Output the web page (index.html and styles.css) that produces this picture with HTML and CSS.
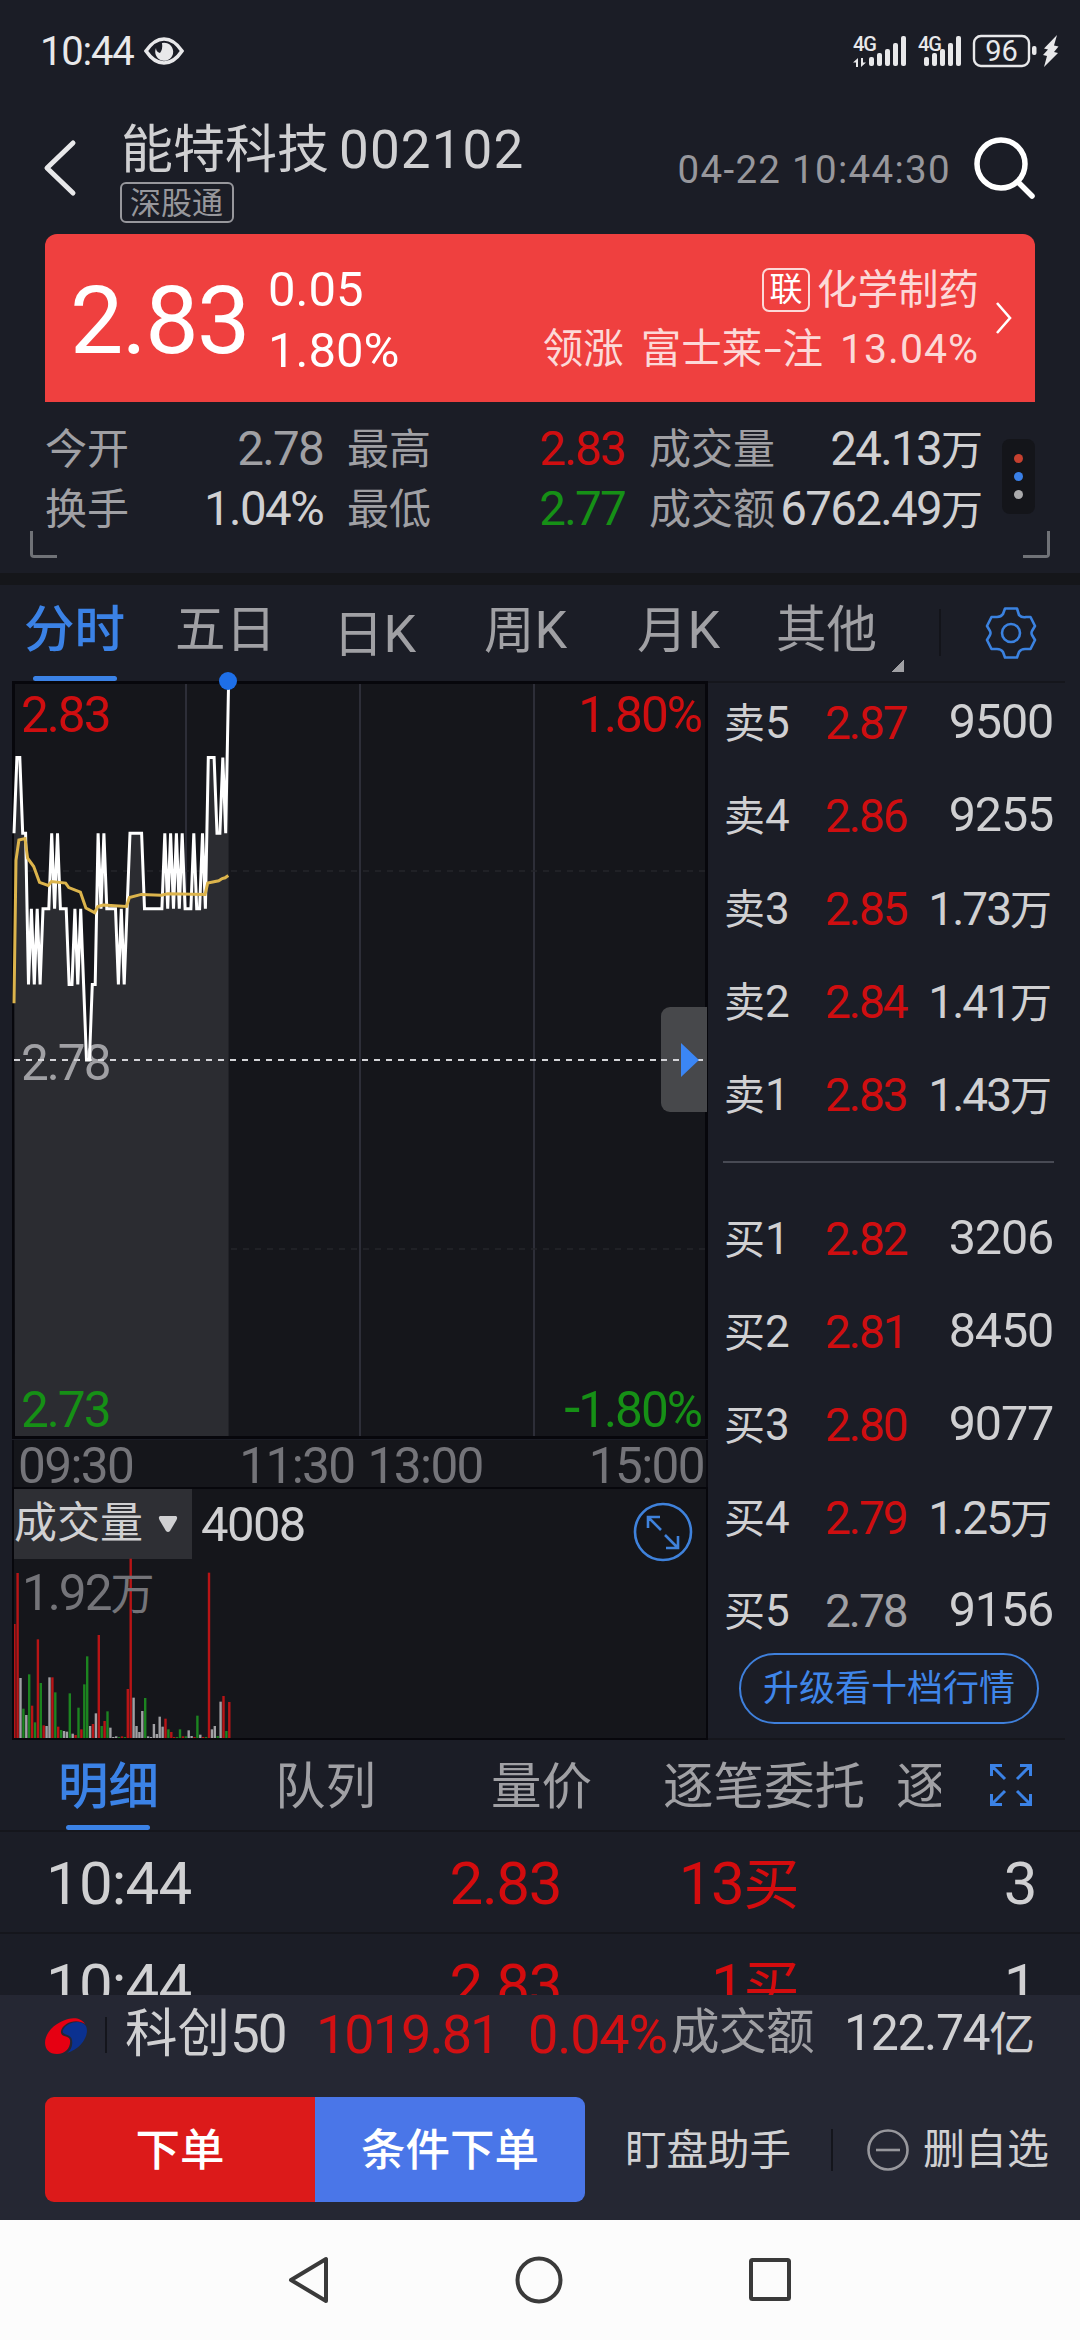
FILE: index.html
```html
<!DOCTYPE html>
<html lang="zh-CN">
<head>
  <meta charset="UTF-8">
  <title>能特科技 002102</title>
  <link rel="stylesheet" href="styles.css">
</head>
<body>
  <div class="status">
    <span class="clock">10:44</span>
    <svg class="eye" width="40" height="28" viewBox="0 0 40 28">
      <path d="M2 14Q10 2 20 2T38 14Q30 26 20 26T2 14Z" fill="none" stroke="#e8e8ea" stroke-width="3.6"/>
      <path d="M18 6A9 9 0 1 1 12 11Q12 15 16 16Q19 12 18 6Z" fill="#e8e8ea"/>
    </svg>
    <svg class="signals" width="206" height="34" viewBox="0 0 206 34" fill="#e8e8ea">
      <text class="net" x="0" y="17">4G</text>
      <path d="M5 33V24L0 28.500H3V33ZM8 24V33L13 28.500H10V24Z"/>
      <rect x="16" y="23" width="5" height="9" rx="2"/><rect x="24" y="19" width="5" height="13" rx="2"/><rect x="32" y="15" width="5" height="17" rx="2"/><rect x="40" y="9" width="5" height="23" rx="2"/><rect x="48" y="2" width="5" height="30" rx="2"/>
      <text class="net" x="65" y="17">4G</text>
      <rect x="71" y="23" width="5" height="9" rx="2"/><rect x="79" y="19" width="5" height="13" rx="2"/><rect x="87" y="15" width="5" height="17" rx="2"/><rect x="95" y="9" width="5" height="23" rx="2"/><rect x="103" y="2" width="5" height="30" rx="2"/>
      <rect x="121" y="2" width="55" height="30" rx="7" fill="none" stroke="#e8e8ea" stroke-width="2.400"/>
      <text class="battery" x="148.500" y="27" text-anchor="middle">96</text>
      <rect x="179" y="12" width="4.500" height="9" rx="2"/>
      <path d="M204 1L191 14.500L195 15.500L190 21L194 22L191 33L205 19L201 18L205.500 12.500L201 11.500Z"/>
    </svg>
  </div>

  <div class="header">
    <svg class="back" width="34" height="56" viewBox="0 0 34 56"><path d="M30 3L4 28L30 53" fill="none" stroke="#e8e8ea" stroke-width="5" stroke-linecap="round" stroke-linejoin="round"/></svg>
    <div class="stock">
      <div class="stock-name"><span>能特科技</span><b>002102</b></div>
      <span class="tag">深股通</span>
    </div>
    <span class="date">04-22 10:44:30</span>
    <svg class="search" width="62" height="62" viewBox="0 0 62 62" fill="none" stroke="#fff" stroke-width="5.500" stroke-linecap="round"><circle cx="27" cy="27" r="24"/><path d="M45 46L58 59"/></svg>
  </div>

  <div class="price-card">
    <span class="price">2.83</span>
    <div class="change"><span>0.05</span><span>1.80%</span></div>
    <div class="sector">
      <div class="sector-name"><i>联</i>化学制药</div>
      <div class="sector-lead"><span>领涨</span><span>富士莱<i class="dash">-</i>注</span><span class="lead-pct">13.04%</span></div>
    </div>
    <svg width="18" height="34" viewBox="0 0 18 34"><path d="M2 2L15 17L2 32" fill="none" stroke="#fff" stroke-width="2.600"/></svg>
  </div>

  <div class="quote">
    <div class="stats">
      <span>今开</span><b class="flat">2.78</b><span>最高</span><b class="up">2.83</b><span>成交量</span><b>24.13<i>万</i></b>
      <span>换手</span><b>1.04%</b><span>最低</span><b class="down">2.77</b><span>成交额</span><b>6762.49<i>万</i></b>
    </div>
    <div class="dots"><i></i><i></i><i></i></div>
    <span class="corner corner-left"></span>
    <span class="corner corner-right"></span>
  </div>

  <div class="tabs">
    <span class="tab active">分时</span>
    <span class="tab">五日</span>
    <span class="tab tab-low">日<b>K</b></span>
    <span class="tab">周<b>K</b></span>
    <span class="tab">月<b>K</b></span>
    <span class="tab more">其他</span>
    <svg class="gear" width="52" height="54" viewBox="0 0 52 54" fill="none" stroke="#3b82e0" stroke-width="2.600" stroke-linejoin="round">
      <path d="M20 2.500H32L34 9Q37 12 41 11L45.500 11L50 20L47 25Q46 27 47 29L50 34L45.500 43L40 43Q36 43 34 46L32 51.500H20L18 46Q16 43 12 43L6.500 43L2 34L5 29Q6 27 5 25L2 20L6.500 11L12 11Q16 11 18 8Z"/>
      <circle cx="26" cy="27" r="9"/>
    </svg>
  </div>

  <div class="main">
    <div class="charts">
      <svg id="priceChart" class="price-chart" width="696" height="758" viewBox="0 0 696 758">
        <rect x="1.500" y="1.500" width="693" height="755" fill="#15161b" stroke="#07070c" stroke-width="3"/>
        <path d="M174 3V755M348 3V755M522 3V755" stroke="#2d2e38" stroke-width="2"/>
        <path d="M3 190H694M3 568H694" stroke="#25262b" stroke-width="1.500" stroke-dasharray="6 6"/>
        <path id="priceArea" fill="#2b2c31"/>
        <text class="up" x="9" y="51">2.83</text>
        <text class="up" x="689" y="51" text-anchor="end">1.80%</text>
        <text class="flat" x="9" y="399">2.78</text>
        <text class="down" x="9" y="746">2.73</text>
        <text class="down" x="689" y="746" text-anchor="end"><tspan class="minus">-</tspan>1.80%</text>
        <path d="M2 379H649" stroke="#d4d4d8" stroke-width="2" stroke-dasharray="6 6"/>
        <path id="priceLine" fill="none" stroke="#fff" stroke-width="3"/>
        <path id="avgLine" fill="none" stroke="#dcb44c" stroke-width="3"/>
      </svg>
      <svg class="now-dot" width="18" height="18" viewBox="0 0 18 18"><circle cx="9" cy="9" r="9" fill="#1e6fe8"/></svg>
      <div class="fold">
        <svg width="46" height="105" viewBox="0 0 46 105"><path d="M0 53H46" stroke="#d4d4d8" stroke-width="2" stroke-dasharray="6 6"/><path d="M20 36L38 53L20 70Z" fill="#3b86f5"/></svg>
      </div>
      <div class="axis"><span>09:30</span><span>11:30</span><span>13:00</span><span>15:00</span></div>
      <div class="volume">
        <div class="volume-head">
          <span class="picker">成交量<svg width="20" height="18" viewBox="0 0 20 18"><path d="M2 1H18Q20 2 18.500 5L12 16Q10 18 8 16L1.500 5Q0 2 2 1Z" fill="#d0d0d2"/></svg></span>
          <b>4008</b>
          <svg class="zoom" width="60" height="60" viewBox="0 0 60 60" fill="none" stroke="#3f82dc" stroke-width="2.600"><circle cx="30" cy="30" r="28"/><path d="M15 26V15H27M15 15L28 28M45 34V46H33M45 46L32 33"/></svg>
        </div>
        <svg id="volumeBars" width="692" height="179" viewBox="0 0 692 179"><text class="axis-max" x="8" y="51">1.92<tspan>万</tspan></text></svg>
      </div>
    </div>

    <div class="book">
      <div class="row"><span>卖<b>5</b></span><b class="up">2.87</b><em>9500</em></div>
      <div class="row"><span>卖<b>4</b></span><b class="up">2.86</b><em>9255</em></div>
      <div class="row"><span>卖<b>3</b></span><b class="up">2.85</b><em class="wan">1.73<i>万</i></em></div>
      <div class="row"><span>卖<b>2</b></span><b class="up">2.84</b><em class="wan">1.41<i>万</i></em></div>
      <div class="row"><span>卖<b>1</b></span><b class="up">2.83</b><em class="wan">1.43<i>万</i></em></div>
      <hr>
      <div class="row"><span>买<b>1</b></span><b class="up">2.82</b><em>3206</em></div>
      <div class="row"><span>买<b>2</b></span><b class="up">2.81</b><em>8450</em></div>
      <div class="row"><span>买<b>3</b></span><b class="up">2.80</b><em>9077</em></div>
      <div class="row"><span>买<b>4</b></span><b class="up">2.79</b><em class="wan">1.25<i>万</i></em></div>
      <div class="row"><span>买<b>5</b></span><b class="flat">2.78</b><em>9156</em></div>
      <div class="upgrade">升级看十档行情</div>
    </div>
  </div>

  <div class="detail-tabs">
    <div class="detail-list">
      <span class="active">明细</span><span>队列</span><span>量价</span><span>逐笔委托</span><span>逐</span>
    </div>
    <svg width="44" height="44" viewBox="0 0 44 44" fill="none" stroke="#3b82e6" stroke-width="3"><path d="M2.500 13V2.500H13M2.500 2.500L16 16M31 2.500H41.500V13M41.500 2.500L28 16M2.500 31V41.500H13M2.500 41.500L16 28M31 41.500H41.500V31M41.500 41.500L28 28"/></svg>
  </div>
  <div class="ticks">
    <div class="tick"><span>10:44</span><b>2.83</b><b>13<i>买</i></b><span>3</span></div>
    <div class="tick"><span>10:44</span><b>2.83</b><b>1<i>买</i></b><span>1</span></div>
  </div>

  <div class="footer">
    <div class="index">
      <svg class="logo" width="42" height="40" viewBox="0 0 42 40">
        <path d="M40 9C34 -1 17 3 6 14C-4 25 -1 39 12 39C21 39 26 32 25 25C24 20 15 23 16 16C18 8 31 3 40 9Z" fill="#e60012"/>
        <path d="M41 11C36 4 22 7 18 15C16 21 26 18 27 25C28 31 26 35 22 38C36 34 45 20 41 11Z" fill="#0b3190"/>
      </svg>
      <span class="index-name">科创<b>50</b></span>
      <b class="index-value">1019.81</b>
      <b class="index-pct">0.04%</b>
      <span class="index-label">成交额</span>
      <b class="index-amount">122.74<i>亿</i></b>
    </div>
    <div class="actions">
      <span class="btn buy">下单</span><span class="btn cond">条件下单</span>
      <span class="watch">盯盘助手</span>
      <span class="remove"><svg width="42" height="42" viewBox="0 0 42 42" fill="none" stroke="#97979c" stroke-width="2.600"><circle cx="21" cy="21" r="19.500"/><path d="M9 21H33"/></svg>删自选</span>
    </div>
  </div>

  <div class="nav">
    <svg width="44" height="50" viewBox="0 0 44 50"><path d="M39 4V46L4 25Z"/></svg>
    <svg width="50" height="50" viewBox="0 0 50 50"><circle cx="25" cy="25" r="21.500"/></svg>
    <svg width="46" height="50" viewBox="0 0 46 50"><rect x="4" y="5" width="38" height="39" rx="1.500"/></svg>
  </div>
  <script src="chart.js"></script>
</body>
</html>
```
FILE: styles.css
```css
* { box-sizing: border-box; }
body { margin: 0; width: 1080px; height: 2340px; overflow: hidden; background: #1b1d26; color: #d0d0d2; font-family: Roboto, "Noto Sans CJK SC", sans-serif; line-height: 1; white-space: nowrap; }
b, i, em { font-weight: normal; font-style: normal; }
svg { display: block; flex: none; overflow: visible; }
.up { color: #cf0e10; fill: #cf0e10; }
.down { color: #169016; fill: #169016; }
.flat { color: #a0a0a4; fill: #a0a0a4; }

.status { display: flex; align-items: center; height: 102px; padding: 0 21px 0 39px; color: #e8e8ea; }
.clock { font-size: 40px; letter-spacing: -1.2px; width: 105px; padding: 2px 0 0 1px; }
.signals { margin-left: auto; }
.net { font-size: 20px; font-weight: 500; letter-spacing: -1px; }
.battery { font-size: 29px; }

.header { display: flex; align-items: center; height: 132px; padding: 0 46px 0 43px; }
.stock { margin: 9px 0 0 43px; display: flex; flex-direction: column; align-items: flex-start; gap: 6px; }
.stock-name { display: flex; align-items: center; height: 54px; margin-left: 1px; padding-top: 4px; font-size: 52px; }
.stock-name b { font-size: 53px; letter-spacing: 1.1px; margin-left: 10px; margin-top: -2px; }
.tag { height: 41px; padding: 3px 9px 0 8px; border: 2px solid #97979c; border-radius: 6px; color: #97979c; font-size: 31px; line-height: 33px; }
.date { margin-left: auto; font-size: 38.5px; letter-spacing: 1.3px; color: #97979c; padding-top: 5px; }
.search { margin: 0 -2px 0 23px; }

.price-card { display: flex; align-items: center; height: 168px; margin: 0 45px; padding: 0 22px 0 25px; border-radius: 12px 12px 0 0; background: #ef403f; color: #fff; }
.price { width: 198px; font-size: 95px; letter-spacing: -1.6px; padding-top: 4px; }
.change { display: flex; flex-direction: column; gap: 12px; font-size: 49px; padding-top: 3px; }
.sector { display: flex; flex-direction: column; align-items: flex-end; gap: 13px; margin: 0 16px 0 auto; font-size: 40.5px; color: #fcd9d8; padding-top: 3px; }
.sector-name { display: flex; align-items: center; height: 46px; }
.sector-name i { display: block; width: 48px; height: 44px; margin-right: 7px; border: 2px solid #fcd9d8; border-radius: 7px; color: #fff; font-size: 33px; line-height: 39px; text-align: center; }
.sector-lead { display: flex; gap: 17px; height: 46px; align-items: center; }
.dash { display: inline-block; margin: 0 4px 0 5px; transform: scaleX(1.6); }
.lead-pct { font-size: 41px; letter-spacing: 1px; }

.quote { position: relative; display: flex; height: 183px; padding: 18px 45px 0; border-bottom: 12px solid #15161a; }
.stats { display: grid; grid-template-columns: 100px 178px 150px 152px 150px 208px; grid-template-rows: 60px 60px; align-items: center; font-size: 42px; }
.stats span { color: #a0a0a4; }
.stats span:nth-child(6n+3), .stats span:nth-child(6n+5) { padding-left: 24px; }
.stats b { font-size: 47.5px; letter-spacing: -1.7px; text-align: right; }
.stats i { font-size: 42px; letter-spacing: 0; }
.dots { display: flex; flex-direction: column; align-items: center; justify-content: center; gap: 9px; width: 33px; height: 75px; margin: 19px 0 0 19px; border-radius: 8px; background: #14151a; }
.dots i { width: 9px; height: 9px; border-radius: 50%; background: #c5402f; }
.dots i:nth-child(2) { background: #3a80e8; }
.dots i:nth-child(3) { background: #aaaaac; }
.corner { position: absolute; top: 129px; width: 27px; height: 27px; border: solid #707277; }
.corner-left { left: 30px; border-width: 0 0 3px 3px; border-bottom-left-radius: 4px; }
.corner-right { right: 30px; border-width: 0 3px 3px 0; border-bottom-right-radius: 4px; }

.tabs { display: grid; grid-template-columns: 151px 158px 151px 153px 139px 165px 1fr; height: 96px; padding-left: 24px; font-size: 50.5px; color: #a0a0a4; }
.tab { position: relative; height: 96px; padding-top: 20px; }
.tab b { font-size: 52px; }
.tab-low { padding-top: 24px; }
.tab.active { color: #3b82e6; font-weight: 500; }
.tab.active::after { content: ""; position: absolute; left: 9px; bottom: 0; width: 84px; height: 5px; border-radius: 3px; background: #3b82e6; }
.more { border-right: 2px solid #15161c; border-image: linear-gradient(transparent 26%, #13141a 26% 73%, transparent 73%) 1; }
.more::after { content: ""; position: absolute; left: 116px; top: 75px; width: 12px; height: 12px; background: linear-gradient(135deg, transparent 50%, #a0a0a4 50%); }
.gear { margin: 21px 0 0 44px; }

.main { display: flex; height: 1059px; padding-left: 12px; }
.charts { position: relative; width: 696px; }
.price-chart text, .axis-max { font-size: 49.5px; letter-spacing: -2px; }
.price-chart .minus { font-size: 58px; }
.now-dot { position: absolute; left: 207px; top: -9px; }
.fold { position: absolute; left: 649px; top: 326px; width: 46px; height: 105px; border-radius: 9px 0 0 9px; background: #47484b; }
.axis { display: flex; height: 47px; padding: 2px 2px 0 4px; border: solid #0a0a10; border-width: 0 2px; background: #15161b; color: #747479; font-size: 49.5px; letter-spacing: -1.6px; line-height: 48px; margin-top: 1px; }
.axis span:nth-child(2) { margin-left: 106px; }
.axis span:nth-child(3) { margin-left: 13px; }
.axis span:nth-child(4) { margin-left: auto; }
.volume { height: 253px; border: 2px solid #07070c; background: #15161b; }
.volume-head { display: flex; height: 70px; }
.picker { display: flex; align-items: center; gap: 15px; width: 178px; padding-bottom: 1px; background: #2e2f34; font-size: 43px; }
.volume-head b { margin-left: 9px; font-size: 49px; line-height: 72px; letter-spacing: -1.6px; }
.zoom { margin: 13px 13px 0 auto; }
.axis-max { fill: #747479; }
.axis-max tspan { font-size: 44px; }

.book { width: 357px; padding: 0 15px; border: solid #15161c; border-width: 2px 0; font-size: 41px; }
.row { display: flex; align-items: center; height: 93px; padding: 0 0 0 1px; }
.row:first-child { margin-top: -7px; }
.row span { width: 101px; }
.row span b { font-size: 44px; }
.row > b { font-size: 46px; letter-spacing: -2px; }
.row em { margin-left: auto; font-size: 48.5px; letter-spacing: -1.2px; margin-right: -3px; }
.row .wan { font-size: 46px; letter-spacing: -2px; margin-right: -2px; }
.row i { font-size: 42px; letter-spacing: 0; }
.book hr { height: 2px; margin: 20px -4px 29px 0; border: 0; background: #484a54; }
.upgrade { width: 300px; height: 71px; margin: -4px 0 0 16px; border: 2px solid #3f80dc; border-radius: 36px; color: #3f86ea; font-size: 36px; line-height: 68px; text-align: center; }

.detail-tabs { display: flex; height: 92px; border-bottom: 2px solid #15161c; }
.detail-tabs svg { margin: 23px 0 0 48px; }
.detail-list { display: flex; width: 941px; overflow: hidden; padding-left: 58px; font-size: 50.5px; line-height: 94px; color: #a0a0a4; }
.detail-list span { position: relative; margin-right: 116px; flex: none; }
.detail-list span:nth-child(2) { margin-right: 115px; }
.detail-list span:nth-child(3) { margin-right: 71px; }
.detail-list span:nth-child(4) { margin-right: 31px; }
.detail-list .active { color: #3b82e6; font-weight: 500; }
.detail-list .active::after { content: ""; position: absolute; left: 8px; top: 85px; width: 84px; height: 5px; border-radius: 3px; background: #3b82e6; }
.ticks { height: 163px; overflow: hidden; }
.tick { display: grid; grid-template-columns: 402px 113px 237px 1fr; align-items: center; height: 102px; padding: 4px 44px 0 46px; border-bottom: 2px solid #15161c; font-size: 60px; letter-spacing: -1.4px; }
.tick span:first-child { letter-spacing: -0.8px; }
.tick b { color: #d40c0e; text-align: right; }
.tick i { font-size: 56px; }
.tick span:last-child { text-align: right; }

.footer { height: 225px; background: #252733; }
.index { display: flex; align-items: center; height: 79px; padding-left: 45px; font-size: 54px; letter-spacing: -2px; }
.index-name { width: 193px; margin-left: 18px; padding-left: 20px; font-size: 52.5px; letter-spacing: 0; background: linear-gradient(#14151c, #14151c) 0 50% / 2px 36px no-repeat; }
.index-name b { font-size: 53px; letter-spacing: -2px; }
.index-value, .index-pct { color: #d21013; }
.index-value { width: 212px; margin-left: 18px; }
.index-label { width: 173px; margin-left: 2px; color: #a0a0a4; font-size: 48.5px; letter-spacing: -1px; padding-bottom: 2px; }
.index-pct { width: 141px; letter-spacing: -1.2px; }
.index-amount { font-size: 50px; letter-spacing: -1.4px; padding-bottom: 3px; }
.index-amount i { font-size: 46px; }
.actions { display: flex; align-items: center; height: 105px; margin: 23px 0 0 45px; font-size: 41.5px; }
.btn { width: 270px; height: 105px; line-height: 108px; text-align: center; color: #fff; font-size: 44.5px; font-weight: 500; }
.buy { border-radius: 9px 0 0 9px; background: #dc1a1a; }
.cond { border-radius: 0 9px 9px 0; background: #4a76e8; }
.watch { margin: 2px 0 0 40px; width: 206px; }
.remove { display: flex; align-items: center; gap: 14px; padding-left: 36px; font-size: 42px; line-height: 46px; background: linear-gradient(#14151c, #14151c) 0 50% / 2px 42px no-repeat; }

.nav { display: flex; align-items: center; height: 120px; padding: 0 287px; justify-content: space-between; background: #fcfcfc; }
.nav svg { fill: none; stroke: #3a3a3a; stroke-width: 4; stroke-linejoin: round; }
```
FILE: chart.js
```js
// one entry per minute since 09:30, in cents above the previous close (2.78)
const prices = [3, 4, 4, 3, 3, 1, 2, 1, 2, 1, 2, 2, 2, 3, 2, 3, 2, 2, 2, 1, 1, 2, 1, 2, 1,
  0, 0, 1, 1, 3, 2, 3, 2, 2, 2, 2, 1, 2, 1, 2, 3, 3, 3, 3, 3, 2, 2, 2, 2, 2, 2,
  2, 3, 2, 3, 2, 3, 2, 3, 2, 2, 2, 3, 2, 2, 3, 2, 4, 4, 4, 3, 3, 4, 3, 5];

// [minute, cents] turning points of the average price
const average = [[0, 0.75], [0.7, 2.64], [1.7, 2.91], [3.8, 2.93], [4.7, 2.67], [6.8, 2.56], [8.8, 2.35],
  [11.8, 2.31], [12.9, 2.36], [17.8, 2.34], [18.9, 2.28], [22.9, 2.22], [24.8, 2.01], [27.8, 1.95],
  [28.9, 2.03], [30.8, 2.05], [38.8, 2.03], [39.8, 2.15], [43.9, 2.19], [50.8, 2.18], [53, 2.2],
  [65.9, 2.19], [66.8, 2.34], [70.6, 2.37], [71.8, 2.4], [72.8, 2.41], [73.9, 2.44]];

const volumes = 'r342 r495 w180 g88 w69 g191 r97 g47 r296 g165 r38 w36 w182 r182 g137 r34 g24 w21 w19 g134 w13 r9 g91 r26 g161 ' +
  'g245 w36 r42 w74 r309 g36 r51 g80 w31 w3 w5 g3 r5 g3 r147 r538 w121 w36 w18 w81 g120 w5 w3 w42 w12 w64 ' +
  'w34 r58 g26 r18 r3 g3 g26 r5 g5 w23 w6 r3 g67 w10 r3 g3 r496 w26 w36 g6 w109 r126 g21 r108';

const STEP = 2.9;
const x = m => (2 + m * STEP).toFixed(1);
const y = c => (379 - c * 75.6).toFixed(1);

const line = prices.map((p, i) => x(i) + ' ' + y(p)).join('L');
document.getElementById('priceLine').setAttribute('d', 'M' + line);
document.getElementById('priceArea').setAttribute('d', 'M3 755L' + line + 'V755Z');
document.getElementById('avgLine').setAttribute('d', 'M' + average.map(a => x(a[0]) + ' ' + y(a[1])).join('L'));

const colors = { r: '#b81416', g: '#1c8420', w: '#a0a0a4' };
const svg = document.getElementById('volumeBars');
volumes.split(' ').forEach((v, i) => {
  const h = v.slice(1) / 3;
  const bar = document.createElementNS('http://www.w3.org/2000/svg', 'rect');
  bar.setAttribute('x', Math.max(0, i * STEP - 0.5));
  bar.setAttribute('y', 179 - h);
  bar.setAttribute('width', i ? 2.4 : 1.6);
  bar.setAttribute('height', h);
  bar.setAttribute('fill', colors[v[0]]);
  svg.prepend(bar);
});
```
